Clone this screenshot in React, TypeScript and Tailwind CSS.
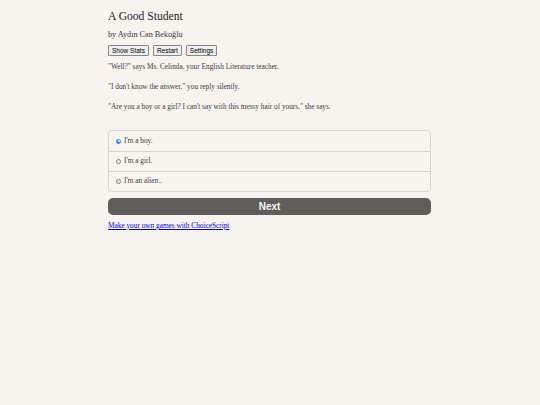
export default function App() {
  const serif = { fontFamily: '"Liberation Serif", "DejaVu Serif", serif' };
  return (
    <div className="min-h-[405px] w-[540px] bg-[#f7f4f0] text-[#3a3a3a]" style={serif}>
      <div className="ml-[108px] w-[323px] pt-[10px]">
        <h1 className="text-[11.6px] leading-[14px] text-[#222]">A Good Student</h1>
        <div className="mt-[6px] text-[8.2px] leading-[10px] text-[#333]">by Aydın Can Bekoğlu</div>
        <div className="mt-[5px] flex gap-[4px]" style={{ fontFamily: '"Liberation Sans", Arial, sans-serif' }}>
          <button className="h-[11px] rounded-[1px] border border-[#888] bg-[#efefef] px-[3px] text-[6.5px] leading-[9px] text-black">Show Stats</button>
          <button className="h-[11px] rounded-[1px] border border-[#888] bg-[#efefef] px-[3px] text-[6.5px] leading-[9px] text-black">Restart</button>
          <button className="h-[11px] rounded-[1px] border border-[#888] bg-[#efefef] px-[3px] text-[6.5px] leading-[9px] text-black">Settings</button>
        </div>
        <div className="mt-[7px] flex flex-col gap-[12px] text-[7.3px] leading-[8px]">
          <p>"Well?" says Ms. Celinda, your English Literature teacher.</p>
          <p>"I don't know the answer," you reply silently.</p>
          <p>"Are you a boy or a girl? I can't say with this messy hair of yours," she says.</p>
        </div>
        <div className="mt-[19px] flex flex-col rounded-[4px] border border-[#d6d3cf]">
          {["I'm a boy.", "I'm a girl.", "I'm an alien.."].map((t, i) => (
            <label key={t} className={`flex h-[20px] items-center gap-[3px] px-[7px] text-[7.3px] ${i > 0 ? "border-t border-[#d6d3cf]" : ""}`}>
              <span className={`flex h-[5px] w-[5px] items-center justify-center rounded-full border ${i === 0 ? "border-[#3b82f6] bg-[#3b82f6]" : "border-[#777] bg-white"}`}>
                {i === 0 && <span className="h-[2px] w-[2px] rounded-full bg-white" />}
              </span>
              <span>{t}</span>
            </label>
          ))}
        </div>
        <button className="mt-[6px] flex h-[17px] w-full items-center justify-center rounded-[5px] bg-[#5f5e5c] text-[10px] font-bold text-[#f5f5f5]" style={{ fontFamily: '"Liberation Sans", Arial, sans-serif' }}>Next</button>
        <a href="#" className="mt-[6px] block text-[7.3px] text-[#0000ee] underline">Make your own games with ChoiceScript</a>
      </div>
    </div>
  );
}
